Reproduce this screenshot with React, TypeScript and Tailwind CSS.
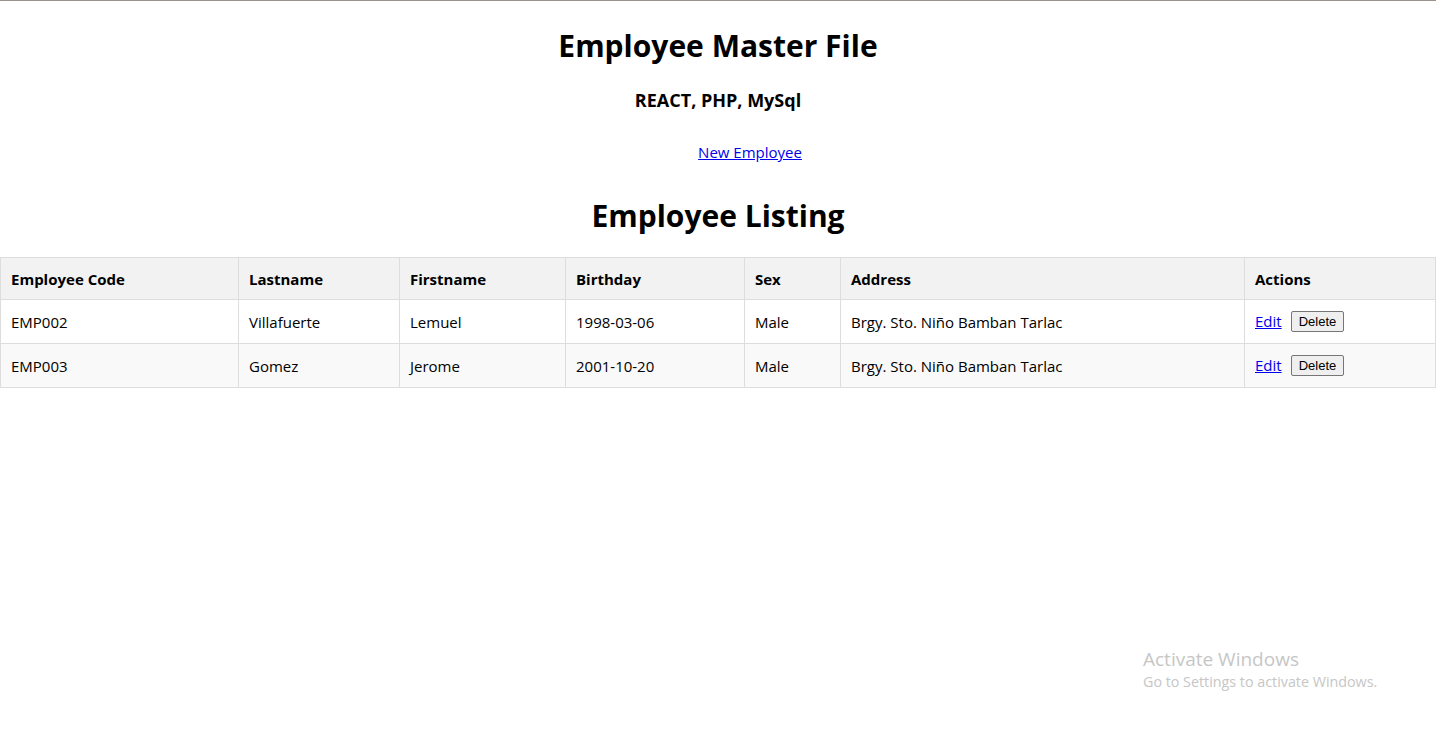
const rows = [
  { code: "EMP002", last: "Villafuerte", first: "Lemuel", bday: "1998-03-06", sex: "Male", addr: "Brgy. Sto. Niño Bamban Tarlac" },
  { code: "EMP003", last: "Gomez", first: "Jerome", bday: "2001-10-20", sex: "Male", addr: "Brgy. Sto. Niño Bamban Tarlac" },
];

const App = () => {
  return (
    <div className="relative min-h-[729px] bg-white border-t border-[#9c918c] text-black font-['Open_Sans',sans-serif]">
      <h1 className="text-center text-[30px] font-bold leading-[40px] pt-[25px]">Employee Master File</h1>
      <h3 className="text-center text-[18px] font-bold leading-[24px] mt-[22px]">REACT, PHP, MySql</h3>
      <div className="text-center mt-[28px] pl-[64px]">
        <a href="#" className="text-[15px] leading-[20px] text-[#0000ee] underline">New Employee</a>
      </div>
      <h2 className="text-center text-[30px] font-bold leading-[40px] mt-[32px]">Employee Listing</h2>
      <table className="w-full table-fixed border-collapse mt-[21px] text-[15px]">
        <thead>
          <tr className="bg-[#f2f2f2] h-[42px]">
            <th className="w-[238px] border border-[#dddddd] text-left font-bold px-[10px] pt-[1px]">Employee Code</th>
            <th className="w-[161px] border border-[#dddddd] text-left font-bold px-[10px] pt-[1px]">Lastname</th>
            <th className="w-[166px] border border-[#dddddd] text-left font-bold px-[10px] pt-[1px]">Firstname</th>
            <th className="w-[179px] border border-[#dddddd] text-left font-bold px-[10px] pt-[1px]">Birthday</th>
            <th className="w-[96px] border border-[#dddddd] text-left font-bold px-[10px] pt-[1px]">Sex</th>
            <th className="w-[404px] border border-[#dddddd] text-left font-bold px-[10px] pt-[1px]">Address</th>
            <th className="border border-[#dddddd] text-left font-bold px-[10px] pt-[1px]">Actions</th>
          </tr>
        </thead>
        <tbody>
          {rows.map((r, i) => (
            <tr key={r.code} className={i % 2 === 1 ? "bg-[#f9f9f9] h-[44px]" : "bg-white h-[44px]"}>
              <td className="border border-[#dddddd] px-[10px] pt-[1px]">{r.code}</td>
              <td className="border border-[#dddddd] px-[10px] pt-[1px]">{r.last}</td>
              <td className="border border-[#dddddd] px-[10px] pt-[1px]">{r.first}</td>
              <td className="border border-[#dddddd] px-[10px] pt-[1px]">{r.bday}</td>
              <td className="border border-[#dddddd] px-[10px] pt-[1px]">{r.sex}</td>
              <td className="border border-[#dddddd] px-[10px] pt-[1px]">{r.addr}</td>
              <td className="border border-[#dddddd] px-[10px]">
                <div className="flex items-center gap-[9px]">
                  <a href="#" className="text-[#0000ee] underline">Edit</a>
                  <button className="h-[21px] px-[7px] bg-[#efefef] border border-[#767676] rounded-[2px] text-[13px] leading-none font-['Liberation_Sans',sans-serif]">
                    Delete
                  </button>
                </div>
              </td>
            </tr>
          ))}
        </tbody>
      </table>

      <div className="absolute left-[1143px] top-[646px] text-[#c6c6c6] font-['Open_Sans',sans-serif]">
        <div className="text-[19px] leading-[24px]">Activate Windows</div>
        <div className="text-[14.3px] leading-[21px]">Go to Settings to activate Windows.</div>
      </div>
    </div>
  );
};

export default App;
